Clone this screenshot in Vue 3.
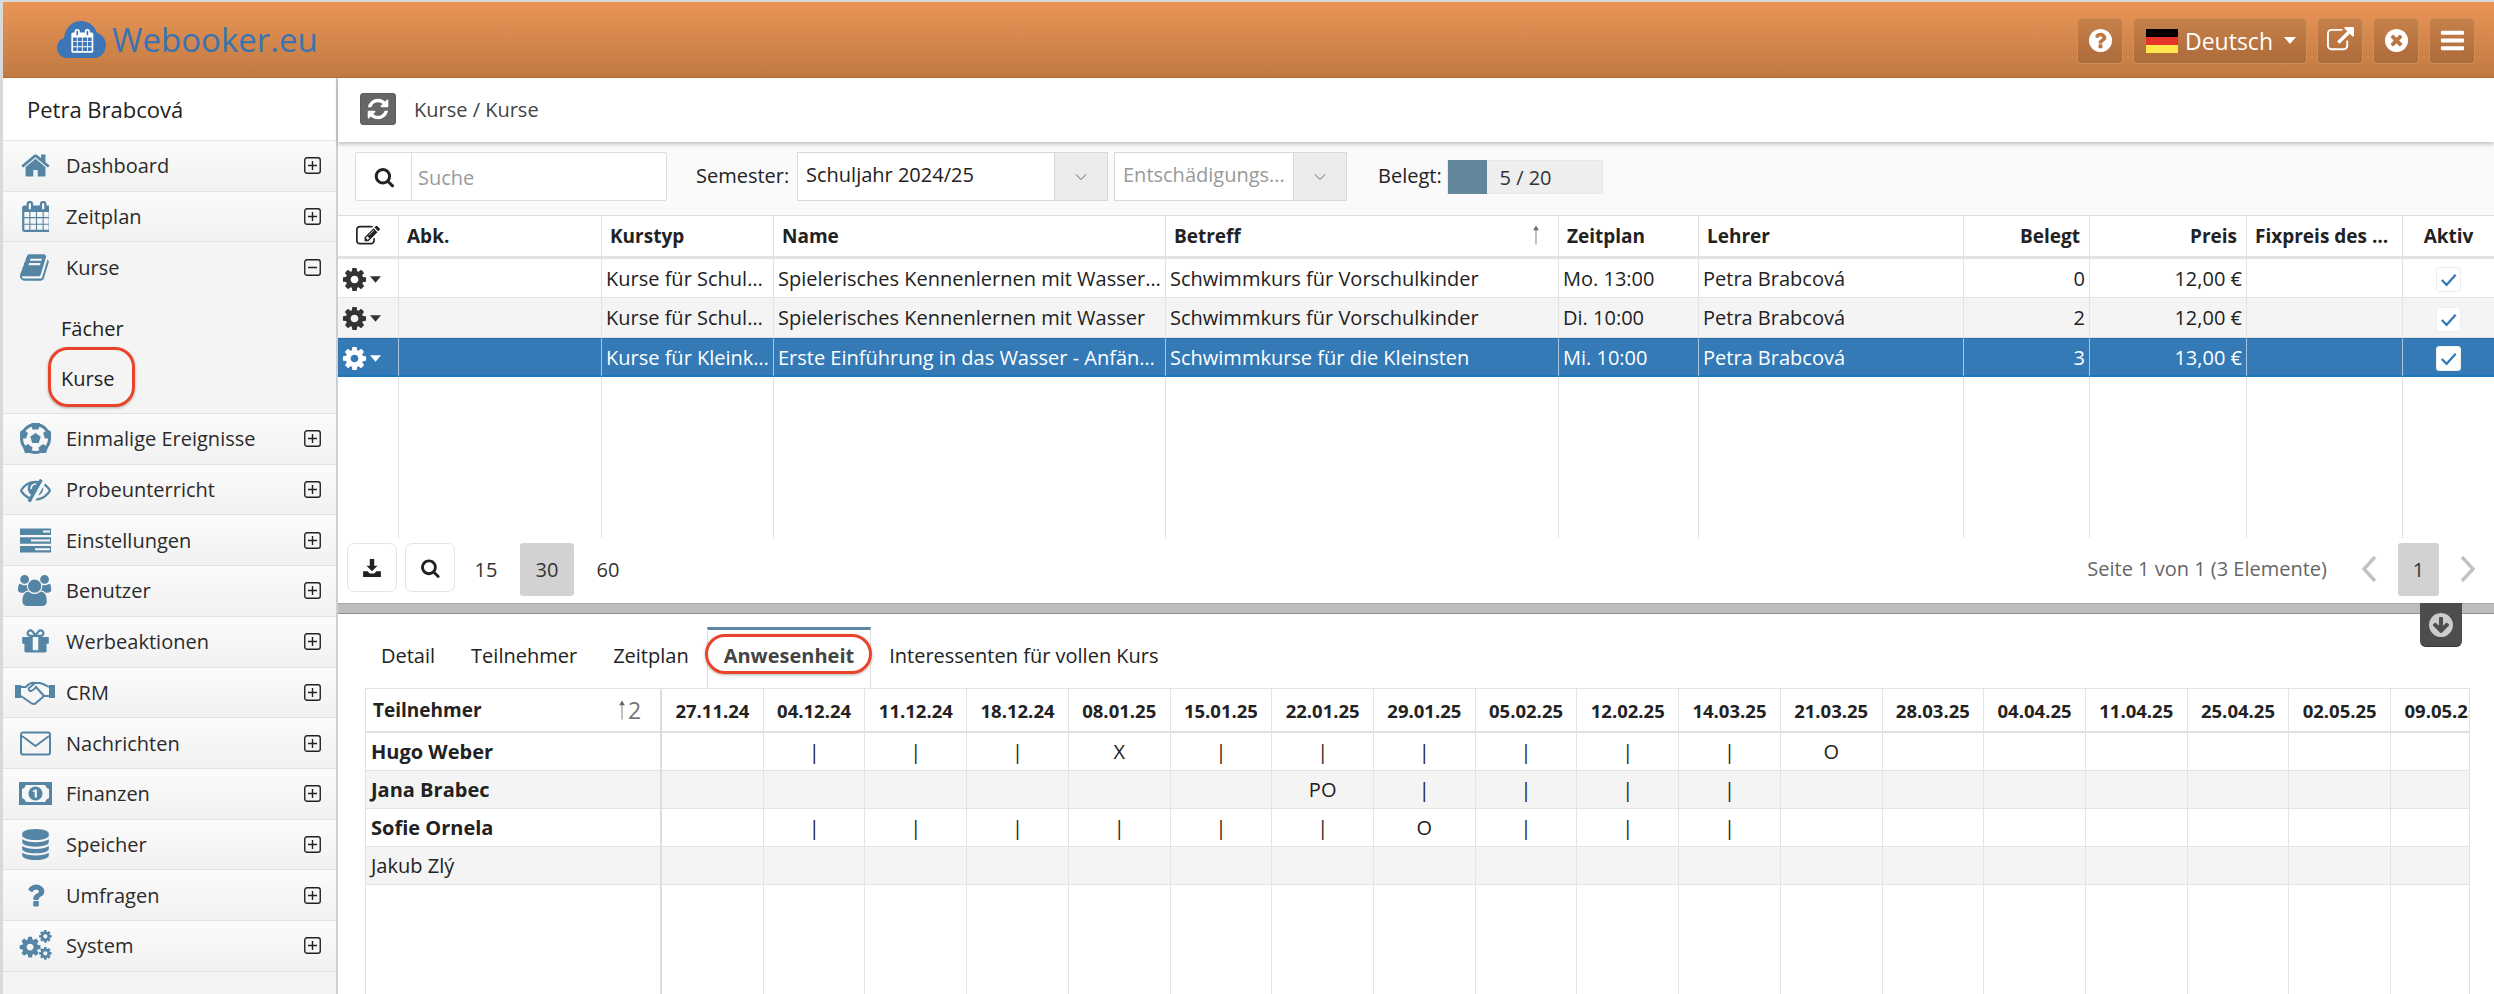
<script setup>
import { h } from 'vue'

const FA = (d, w = 1792) => ({ vb: `0 0 ${w} 1792`, parts: [{ d }] })
const pent = (cx, cy, r, rot = -90) => {
  const pts = [0, 1, 2, 3, 4].map((i) => {
    const a = ((rot + i * 72) * Math.PI) / 180
    return `${(cx + r * Math.cos(a)).toFixed(2)} ${(cy + r * Math.sin(a)).toFixed(2)}`
  })
  return 'M' + pts.join('L') + 'z'
}
const rim = [-90, -18, 54, 126, 198].map((a) => {
  const t = (a * Math.PI) / 180
  return { d: pent(15.5 + 13 * Math.cos(t), 15.5 + 13 * Math.sin(t), 5, a) }
})
const COG = 'M1152 896q0-106-75-181t-181-75-181 75-75 181 75 181 181 75 181-75 75-181zm512-109v222q0 12-8 23t-20 13l-185 28q-19 54-39 91 35 50 107 138 10 12 10 25t-9 23q-27 37-99 108t-94 71q-12 0-26-9l-138-108q-44 23-91 38-16 136-29 186-7 28-36 28h-222q-14 0-24.5-8.5t-11.5-21.5l-28-184q-49-16-90-37l-141 107q-10 9-25 9-14 0-25-11-126-114-165-168-7-10-7-23 0-12 8-23 15-21 51-66.5t54-70.5q-27-50-41-99l-183-27q-13-2-21-12.5t-8-23.5v-222q0-12 8-23t19-13l186-28q14-46 39-92-40-57-107-138-10-12-10-24 0-10 9-23 26-36 98.5-107.5t94.5-71.5q13 0 26 10l138 107q44-23 91-38 16-136 29-186 7-28 36-28h222q14 0 24.5 8.5t11.5 21.5l28 184q49 16 90 37l142-107q9-9 24-9 13 0 25 10 129 119 165 170 7 8 7 22 0 12-8 23-15 21-51 66.5t-54 70.5q26 50 41 98l183 28q13 2 21 12.5t8 23.5z'
const CAL = 'M192 1664h288v-288h-288v288zm352 0h320v-288h-320v288zm-352-352h288v-320h-288v320zm352 0h320v-320h-320v320zm-352-384h288v-288h-288v288zm736 736h320v-288h-320v288zm-384-736h320v-288h-320v288zm768 736h288v-288h-288v288zm-384-352h320v-320h-320v320zm-352-864v-288q0-13-9.5-22.5t-22.5-9.5h-64q-13 0-22.5 9.5t-9.5 22.5v288q0 13 9.5 22.5t22.5 9.5h64q13 0 22.5-9.5t9.5-22.5zm736 864h288v-320h-288v320zm-384-384h320v-288h-320v288zm384 0h288v-288h-288v288zm32-480v-288q0-13-9.5-22.5t-22.5-9.5h-64q-13 0-22.5 9.5t-9.5 22.5v288q0 13 9.5 22.5t22.5 9.5h64q13 0 22.5-9.5t9.5-22.5zm384-64v1280q0 52-38 90t-90 38h-1408q-52 0-90-38t-38-90v-1280q0-52 38-90t90-38h128v-96q0-66 47-113t113-47h64q66 0 113 47t47 113v96h384v-96q0-66 47-113t113-47h64q66 0 113 47t47 113v96h128q52 0 90 38t38 90z'
const BG = '#f6f6f6'

const I = {
  home: FA('M1472 992v480q0 26-19 45t-45 19h-384v-384h-256v384h-384q-26 0-45-19t-19-45v-480q0-1 .5-3t.5-3l575-474 575 474q1 2 1 6zm223-69l-62 74q-8 9-21 11h-3q-13 0-21-7l-692-577-692 577q-12 8-24 7-13-2-21-11l-62-74q-8-10-7-23.5t11-21.5l719-599q32-26 76-26t76 26l244 204v-195q0-14 9-23t23-9h192q14 0 23 9t9 23v408l219 182q10 8 11 21.5t-7 23.5z'),
  calendar: FA(CAL, 1664),
  book: FA('M1639 478q40 57 18 129l-275 906q-19 64-76.5 107.5t-122.5 43.5h-923q-77 0-148.5-53.5t-99.5-131.5q-24-67-2-127 0-4 3-27t4-37q1-8-3-21.5t-3-19.5q2-11 8-21t16.5-23.5 16.5-23.5q23-38 45-91.5t30-91.5q3-10 .5-30t-.5-28q3-11 17-28t17-23q21-36 42-92t25-90q1-9-2.5-32t.5-28q4-13 22-30.5t22-22.5q19-26 42.5-84.5t27.5-96.5q1-8-3-25.5t-2-26.5q2-8 9-18t18-23 17-21q8-12 16.5-30.5t15-35 16-36 19.5-32 26.5-23.5 36-11.5 47.5 5.5l-1 3q38-9 51-9h761q74 0 114 56t18 130l-274 906q-36 119-71.5 153.5t-128.5 34.5h-869q-27 0-38 15-11 16-1 43 24 70 144 70h923q29 0 56-15.5t35-41.5l300-987q7-22 5-57 38 15 59 43zm-1064 2q-4 13 2 22.5t20 9.5h608q13 0 25.5-9.5t16.5-22.5l21-64q4-13-2-22.5t-20-9.5h-608q-13 0-25.5 9.5t-16.5 22.5zm-83 256q-4 13 2 22.5t20 9.5h608q13 0 25.5-9.5t16.5-22.5l21-64q4-13-2-22.5t-20-9.5h-608q-13 0-25.5 9.5t-16.5 22.5z'),
  ball: {
    vb: '0 0 31 31',
    parts: [
      { d: 'M15.5 0a15.5 15.5 0 1 0 .01 0z' },
      { d: 'M15.5 3a12.5 12.5 0 1 0 .01 0z', fill: BG },
      { d: pent(15.5, 15.5, 5.5) },
      ...rim
    ]
  },
  eye: FA('M555 1335l78-141q-87-63-136-159t-49-203q0-121 61-225-229 117-381 353 167 258 427 375zm389-759q0-20-14-34t-34-14q-125 0-214.5 89.5t-89.5 214.5q0 20 14 34t34 14 34-14 14-34q0-86 61-147t147-61q20 0 34-14t14-34zm363-191q0 7-1 9-106 189-316 567t-315 566l-49 89q-10 16-28 16-12 0-134-70-16-10-16-28 0-12 44-87-143-65-263.5-173t-208.5-245q-20-31-20-69t20-69q153-235 380-371t496-136q89 0 180 17l54-97q10-16 28-16 5 0 18 6t31 15.5 33 18.5 31.5 18.5 19.5 11.5q16 10 16 27zm37 447q0 139-79 253.5t-209 164.5l280-502q8 45 8 84zm448 128q0 35-20 69-39 64-109 145-150 172-347.5 267t-419.5 95l74-132q212-18 392.5-137t301.5-307q-115-179-282-294l63-112q95 64 182.5 153t144.5 184q20 34 20 69z'),
  tasks: {
    vb: '0 0 31 31',
    parts: [
      { d: 'M0 3.5h31v6.5H0zM0 12.2h31v6.5H0zM0 21h31v6.5H0z' },
      { d: 'M23 5.5h7v2h-7zM11 14.4h19v2H11zM15 23.2h15v2H15z', fill: BG }
    ]
  },
  users: FA('M593 896q-162 5-265 128h-134q-82 0-138-40.5t-56-118.5q0-353 124-353 6 0 43.5 21t97.5 42.5 119 21.5q67 0 133-23-5 37-5 66 0 139 81 256zm1071 637q0 120-73 189.5t-194 69.5h-874q-121 0-194-69.5t-73-189.5q0-53 3.5-103.5t14-109 26.5-108.5 43-97.5 62-81 85.5-53.5 111.5-20q10 0 43 21.5t73 48 107 48 135 21.5 135-21.5 107-48 73-48 43-21.5q61 0 111.5 20t85.5 53.5 62 81 43 97.5 26.5 108.5 14 109 3.5 103.5zm-1024-1277q0 106-75 181t-181 75-181-75-75-181 75-181 181-75 181 75 75 181zm704 384q0 159-112.5 271.5t-271.5 112.5-271.5-112.5-112.5-271.5 112.5-271.5 271.5-112.5 271.5 112.5 112.5 271.5zm576 225q0 78-56 118.5t-138 40.5h-134q-103-123-265-128 81-117 81-256 0-29-5-66 66 23 133 23 59 0 119-21.5t97.5-42.5 43.5-21q124 0 124 353zm-128-609q0 106-75 181t-181 75-181-75-75-181 75-181 181-75 181 75 75 181z', 1920),
  gift: FA('M1056 1356v-716h-320v716q0 25 18 38.5t46 13.5h192q28 0 46-13.5t18-38.5zm-456-844h195l-126-161q-26-31-69-31-40 0-68 28t-28 68 28 68 68 28zm688-96q0-40-28-68t-68-28q-43 0-69 31l-125 161h194q40 0 68-28t28-68zm376 256v320q0 14-9 23t-23 9h-96v416q0 40-28 68t-68 28h-1088q-40 0-68-28t-28-68v-416h-96q-14 0-23-9t-9-23v-320q0-14 9-23t23-9h440q-93 0-158.5-65.5t-65.5-158.5 65.5-158.5 158.5-65.5q107 0 168 77l128 165 128-165q61-77 168-77 93 0 158.5 65.5t65.5 158.5-65.5 158.5-158.5 65.5h440q14 0 23 9t9 23z'),
  shake: {
    vb: '0 0 40 31',
    parts: [
      { d: 'M0 8h6v13H0zM34 8h6v13h-6z' },
      { d: 'M6 10l5 0q4-5 9-4l5 0q4 1 9 4M34 19l-5 0-8 7q-2 2-5 0l-10-7M20 6l-6 5q-1 3 2 3 3-1 5-4l8 9', fill: 'none', stroke: 'currentColor', sw: 2 }
    ]
  },
  mail: {
    vb: '0 0 31 31',
    parts: [
      { d: 'M3 4.5h25a2 2 0 0 1 2 2v18a2 2 0 0 1-2 2H3a2 2 0 0 1-2-2v-18a2 2 0 0 1 2-2zM2 8l13.5 10L29 8', fill: 'none', stroke: 'currentColor', sw: 2 }
    ]
  },
  money: {
    vb: '0 0 33 31',
    parts: [
      { d: 'M0 4h33v23H0z' },
      { d: 'M7 7h19q1 3 4 4v9q-3 1-4 4H7q-1-3-4-4v-9q3-1 4-4z', fill: BG },
      { d: 'M16.5 8.5a7 7 0 1 0 .01 0z' },
      { d: 'M15.7 11.5h2.2v8h-2.2zM13.8 12.8l2-1.3v2l-2 .8z', fill: BG }
    ]
  },
  db: FA('M896 768q237 0 443-43t325-127v170q0 69-103 128t-280 93.5-385 34.5-385-34.5-280-93.5-103-128v-170q119 84 325 127t443 43zm0 768q237 0 443-43t325-127v170q0 69-103 128t-280 93.5-385 34.5-385-34.5-280-93.5-103-128v-170q119 84 325 127t443 43zm0-384q237 0 443-43t325-127v170q0 69-103 128t-280 93.5-385 34.5-385-34.5-280-93.5-103-128v-170q119 84 325 127t443 43zm0-1152q208 0 385 34.5t280 93.5 103 128v128q0 69-103 128t-280 93.5-385 34.5-385-34.5-280-93.5-103-128v-128q0-69 103-128t280-93.5 385-34.5z'),
  question: FA('M1088 1256v240q0 16-12 28t-28 12h-240q-16 0-28-12t-12-28v-240q0-16 12-28t28-12h240q16 0 28 12t12 28zm316-600q0 54-15.5 101t-35 76.5-55 59.5-57.5 43.5-61 35.5q-41 23-68.5 65t-27.5 67q0 17-12 32.5t-28 15.5h-240q-15 0-25.5-18.5t-10.5-37.5v-45q0-83 65-156.5t143-108.5q59-27 84-56t25-76q0-42-46.5-74t-107.5-32q-65 0-108 29-35 25-107 115-13 16-31 16-12 0-25-8l-164-125q-13-10-15.5-25t5.5-28q160-266 464-266 80 0 161 31t146 83 106 127.5 41 158.5z'),
  cogs: {
    vb: '0 0 33 31',
    parts: [
      { d: COG, tr: 'translate(-1 5) scale(.0135)' },
      { d: COG, tr: 'translate(19 -1) scale(.0082)' },
      { d: COG, tr: 'translate(19 16) scale(.0082)' }
    ]
  },
  cog: FA(COG),
  search: FA('M1216 832q0-185-131.5-316.5t-316.5-131.5-316.5 131.5-131.5 316.5 131.5 316.5 316.5 131.5 316.5-131.5 131.5-316.5zm512 832q0 52-38 90t-90 38q-54 0-90-38l-343-342q-179 124-399 124-143 0-273.5-55.5t-225-150-150-225-55.5-273.5 55.5-273.5 150-225 225-150 273.5-55.5 273.5 55.5 225 150 150 225 55.5 273.5q0 220-124 399l343 343q37 37 37 90z', 1728),
  help: FA('M1024 1376v-192q0-14-9-23t-23-9h-192q-14 0-23 9t-9 23v192q0 14 9 23t23 9h192q14 0 23-9t9-23zm256-672q0-88-55.5-163t-138.5-116-170-41q-243 0-371 213-15 24 8 42l132 100q7 6 19 6 16 0 25-12 53-68 86-92 34-24 86-24 48 0 85.5 26t37.5 59q0 38-20 61t-68 45q-63 28-115.5 86.5t-52.5 125.5v36q0 14 9 23t23 9h192q14 0 23-9t9-23q0-19 21.5-49.5t54.5-49.5q32-18 49-28.5t46-35 44.5-48 28-60.5 12.5-81zm384 192q0 209-103 385.5t-279.5 279.5-385.5 103-385.5-103-279.5-279.5-103-385.5 103-385.5 279.5-279.5 385.5-103 385.5 103 279.5 279.5 103 385.5z'),
  times: FA('M1277 1122q0-26-19-45l-181-181 181-181q19-19 19-45 0-27-19-46l-90-90q-19-19-46-19-26 0-45 19l-181 181-181-181q-19-19-45-19-27 0-46 19l-90 90q-19 19-19 46 0 26 19 45l181 181-181 181q-19 19-19 45 0 27 19 46l90 90q19 19 46 19 26 0 45-19l181-181 181 181q19 19 45 19 27 0 46-19l90-90q19-19 19-46zm387-226q0 209-103 385.5t-279.5 279.5-385.5 103-385.5-103-279.5-279.5-103-385.5 103-385.5 279.5-279.5 385.5-103 385.5 103 279.5 279.5 103 385.5z'),
  bars: FA('M1664 1344v128q0 26-19 45t-45 19h-1408q-26 0-45-19t-19-45v-128q0-26 19-45t45-19h1408q26 0 45 19t19 45zm0-512v128q0 26-19 45t-45 19h-1408q-26 0-45-19t-19-45v-128q0-26 19-45t45-19h1408q26 0 45 19t19 45zm0-512v128q0 26-19 45t-45 19h-1408q-26 0-45-19t-19-45v-128q0-26 19-45t45-19h1408q26 0 45 19t19 45z'),
  link: FA('M1408 928v320q0 119-84.5 203.5t-203.5 84.5h-832q-119 0-203.5-84.5t-84.5-203.5v-832q0-119 84.5-203.5t203.5-84.5h704q14 0 23 9t9 23v64q0 14-9 23t-23 9h-704q-66 0-113 47t-47 113v832q0 66 47 113t113 47h832q66 0 113-47t47-113v-320q0-14 9-23t23-9h64q14 0 23 9t9 23zm384-864v512q0 26-19 45t-45 19-45-19l-176-176-652 652q-10 10-23 10t-23-10l-114-114q-10-10-10-23t10-23l652-652-176-176q-19-19-19-45t19-45 45-19h512q26 0 45 19t19 45z'),
  refresh: FA('M1639 1056q0 5-1 7-64 268-268 434.5t-478 166.5q-146 0-282.5-55t-243.5-157l-129 129q-19 19-45 19t-45-19-19-45v-448q0-26 19-45t45-19h448q26 0 45 19t19 45-19 45l-137 137q71 66 161 102t187 36q134 0 250-65t186-179q11-17 53-117 8-23 30-23h192q13 0 22.5 9.5t9.5 22.5zm25-800v448q0 26-19 45t-45 19h-448q-26 0-45-19t-19-45 19-45l138-138q-148-137-349-137-134 0-250 65t-186 179q-11 17-53 117-8 23-30 23h-199q-13 0-22.5-9.5t-9.5-22.5v-7q65-268 270-434.5t480-166.5q146 0 284 55.5t245 156.5l130-129q19-19 45-19t45 19 19 45z'),
  down: FA('M1412 897q0-27-18-45l-91-91q-18-18-45-18t-45 18l-189 189v-502q0-26-19-45t-45-19h-128q-26 0-45 19t-19 45v502l-189-189q-19-19-45-19t-45 19l-91 91q-18 18-18 45t18 45l362 362 91 91q18 18 45 18t45-18l91-91 362-362q18-18 18-45zm252-1q0 209-103 385.5t-279.5 279.5-385.5 103-385.5-103-279.5-279.5-103-385.5 103-385.5 279.5-279.5 385.5-103 385.5 103 279.5 279.5 103 385.5z'),
  edit: FA('M888 1184l116-116-152-152-116 116v56h96v96h56zm440-720q-16-16-33 1l-350 350q-17 17-1 33t33-1l350-350q17-17 1-33zm80 594v190q0 119-84.5 203.5t-203.5 84.5h-832q-119 0-203.5-84.5t-84.5-203.5v-832q0-119 84.5-203.5t203.5-84.5h832q63 0 117 25 15 7 18 23 3 17-9 29l-49 49q-14 14-32 8-23-6-45-6h-832q-66 0-113 47t-47 113v832q0 66 47 113t113 47h832q66 0 113-47t47-113v-126q0-13 9-22l64-64q15-15 35-7t20 29zm-96-738l288 288-672 672h-288v-288zm444 132l-92 92-288-288 92-92q28-28 68-28t68 28l152 152q28 28 28 68t-28 68z'),
  save: {
    vb: '0 0 18 18',
    parts: [
      { d: 'M7 1h4v6h3l-5 5-5-5h3zM1 12h4l2 2h4l2-2h4v5H1z' }
    ]
  },
  plus: {
    vb: '0 0 17 17',
    parts: [{ d: 'M3 .75h11A2.25 2.25 0 0 1 16.25 3v11a2.25 2.25 0 0 1-2.25 2.25H3A2.25 2.25 0 0 1 .75 14V3A2.25 2.25 0 0 1 3 .75zM8.5 4v9M4 8.5h9', fill: 'none', stroke: 'currentColor', sw: 1.4 }]
  },
  minus: {
    vb: '0 0 17 17',
    parts: [{ d: 'M3 .75h11A2.25 2.25 0 0 1 16.25 3v11a2.25 2.25 0 0 1-2.25 2.25H3A2.25 2.25 0 0 1 .75 14V3A2.25 2.25 0 0 1 3 .75zM4 8.5h9', fill: 'none', stroke: 'currentColor', sw: 1.4 }]
  },
  caret: { vb: '0 0 12 7', parts: [{ d: 'M0 0h12L6 7z' }] },
  check: { vb: '0 0 24 24', parts: [{ d: 'M5 12.5l5 5L19.5 7', fill: 'none', stroke: '#337ab7', sw: 2.4 }] },
  vee: { vb: '0 0 12 8', parts: [{ d: 'M1 1.5L6 6.5 11 1.5', fill: 'none', stroke: 'currentColor', sw: 1 }] },
  arrow: { vb: '0 0 10 24', parts: [{ d: 'M5 0l3.5 6h-3v18h-1V6h-3z' }] },
  chevL: { vb: '0 0 16 28', parts: [{ d: 'M14 2L3 14l11 12', fill: 'none', stroke: 'currentColor', sw: 3.4 }] },
  chevR: { vb: '0 0 16 28', parts: [{ d: 'M2 2l11 12L2 26', fill: 'none', stroke: 'currentColor', sw: 3.4 }] },
  logo: {
    vb: '0 0 49 37',
    parts: [
      { d: 'M11 37C4 37 0 32 0 27c0-5 3-9 7-10C8 7 15 0 24 0c8 0 14 5 16 12 5 1 9 6 9 12 0 7-5 13-12 13z' },
      { d: CAL, tr: 'translate(13.5 8) scale(.0132)', fill: '#fff' }
    ]
  }
}

const Ico = (props) =>
  h(
    'svg',
    { viewBox: I[props.n].vb, 'aria-hidden': 'true' },
    I[props.n].parts.map((p) =>
      h('path', {
        d: p.d,
        fill: p.fill || 'currentColor',
        transform: p.tr,
        stroke: p.stroke,
        'stroke-width': p.sw
      })
    )
  )
Ico.props = ['n']

const menuTop = [
  { label: 'Dashboard', icon: 'home' },
  { label: 'Zeitplan', icon: 'calendar' }
]
const menuRest = [
  { label: 'Einmalige Ereignisse', icon: 'ball' },
  { label: 'Probeunterricht', icon: 'eye' },
  { label: 'Einstellungen', icon: 'tasks' },
  { label: 'Benutzer', icon: 'users' },
  { label: 'Werbeaktionen', icon: 'gift' },
  { label: 'CRM', icon: 'shake' },
  { label: 'Nachrichten', icon: 'mail' },
  { label: 'Finanzen', icon: 'money' },
  { label: 'Speicher', icon: 'db' },
  { label: 'Umfragen', icon: 'question' },
  { label: 'System', icon: 'cogs' }
]

const courses = [
  { typ: 'Kurse für Schulkinder', name: 'Spielerisches Kennenlernen mit Wasser und Spaß', betreff: 'Schwimmkurs für Vorschulkinder', zeit: 'Mo. 13:00', belegt: 0, preis: '12,00 €' },
  { typ: 'Kurse für Schulkinder', name: 'Spielerisches Kennenlernen mit Wasser', betreff: 'Schwimmkurs für Vorschulkinder', zeit: 'Di. 10:00', belegt: 2, preis: '12,00 €' },
  { typ: 'Kurse für Kleinkinder', name: 'Erste Einführung in das Wasser - Anfänger', betreff: 'Schwimmkurse für die Kleinsten', zeit: 'Mi. 10:00', belegt: 3, preis: '13,00 €', sel: true }
]

const dates = ['27.11.24', '04.12.24', '11.12.24', '18.12.24', '08.01.25', '15.01.25', '22.01.25', '29.01.25', '05.02.25', '12.02.25', '14.03.25', '21.03.25', '28.03.25', '04.04.25', '11.04.25', '25.04.25', '02.05.25', '09.05.25']
const attendance = [
  { name: 'Hugo Weber', bold: true, marks: ['', '|', '|', '|', 'X', '|', '|', '|', '|', '|', '|', 'O'] },
  { name: 'Jana Brabec', bold: true, marks: ['', '', '', '', '', '', 'PO', '|', '|', '|', '|', ''] },
  { name: 'Sofie Ornela', bold: true, marks: ['', '|', '|', '|', '|', '|', '|', 'O', '|', '|', '|', ''] },
  { name: 'Jakub Zlý', bold: false, marks: [] }
]
const tabs = ['Detail', 'Teilnehmer', 'Zeitplan', 'Anwesenheit', 'Interessenten für vollen Kurs']
</script>

<template>
  <div class="app">
    <header class="topbar">
      <div class="brand">
        <Ico n="logo" class="logo" />
        <span class="brand-name">Webooker.eu</span>
      </div>
      <div class="actions">
        <button class="tbtn"><Ico n="help" class="tic" /></button>
        <button class="tbtn lang">
          <span class="flag"><i class="s1"></i><i class="s2"></i><i class="s3"></i></span>
          <span>Deutsch</span>
          <Ico n="caret" class="lang-caret" />
        </button>
        <button class="tbtn"><Ico n="link" class="tic" /></button>
        <button class="tbtn"><Ico n="times" class="tic" /></button>
        <button class="tbtn"><Ico n="bars" class="tic" /></button>
      </div>
    </header>

    <div class="body">
      <aside class="sidebar">
        <div class="user">Petra Brabcová</div>
        <nav>
          <div v-for="m in menuTop" :key="m.label" class="mi">
            <span class="mi-ic"><Ico :n="m.icon" /></span>
            <span class="mi-label">{{ m.label }}</span>
            <Ico n="plus" class="mi-tog" />
          </div>
          <div class="mi open">
            <span class="mi-ic"><Ico n="book" /></span>
            <span class="mi-label">Kurse</span>
            <Ico n="minus" class="mi-tog" />
          </div>
          <div class="sub">
            <div class="sub-item">Fächer</div>
            <div class="sub-item"><span class="ring ring-side"></span>Kurse</div>
          </div>
          <div v-for="m in menuRest" :key="m.label" class="mi">
            <span class="mi-ic"><Ico :n="m.icon" /></span>
            <span class="mi-label">{{ m.label }}</span>
            <Ico n="plus" class="mi-tog" />
          </div>
        </nav>
      </aside>

      <main class="main">
        <div class="crumb">
          <button class="refresh"><Ico n="refresh" /></button>
          <span>Kurse / Kurse</span>
        </div>

        <div class="toolbar">
          <div class="search">
            <span class="search-btn"><Ico n="search" /></span>
            <span class="search-input">Suche</span>
          </div>
          <span class="lbl lbl-sem">Semester:</span>
          <div class="select sel-sem">
            <span class="sel-text">Schuljahr 2024/25</span>
            <span class="sel-arrow"><Ico n="vee" /></span>
          </div>
          <div class="select sel-ent">
            <span class="sel-text muted">Entschädigungs...</span>
            <span class="sel-arrow"><Ico n="vee" /></span>
          </div>
          <span class="lbl lbl-bel">Belegt:</span>
          <div class="progress">
            <div class="progress-fill" :style="{ width: (5 / 20) * 100 + '%' }"></div>
            <span class="progress-text">5 / 20</span>
          </div>
        </div>

        <div class="tbl-wrap">
          <table class="tbl">
            <colgroup>
              <col class="c0" /><col class="c1" /><col class="c2" /><col class="c3" /><col class="c4" />
              <col class="c5" /><col class="c6" /><col class="c7" /><col class="c8" /><col class="c9" /><col class="c10" />
            </colgroup>
            <thead>
              <tr>
                <th class="ctr"><Ico n="edit" class="edit" /></th>
                <th>Abk.</th>
                <th>Kurstyp</th>
                <th>Name</th>
                <th class="sorted">Betreff<Ico n="arrow" class="sort-arrow" /></th>
                <th>Zeitplan</th>
                <th>Lehrer</th>
                <th class="num">Belegt</th>
                <th class="num">Preis</th>
                <th>Fixpreis des Kurses</th>
                <th class="ctr">Aktiv</th>
              </tr>
            </thead>
            <tbody>
              <tr v-for="c in courses" :key="c.zeit" :class="{ sel: c.sel }">
                <td class="gear-cell"><Ico n="cog" class="gear" /><Ico n="caret" class="gear-caret" /></td>
                <td></td>
                <td>{{ c.typ }}</td>
                <td>{{ c.name }}</td>
                <td>{{ c.betreff }}</td>
                <td>{{ c.zeit }}</td>
                <td>Petra Brabcová</td>
                <td class="num">{{ c.belegt }}</td>
                <td class="num">{{ c.preis }}</td>
                <td></td>
                <td class="ctr"><span class="chk"><Ico n="check" /></span></td>
              </tr>
              <tr class="filler"><td v-for="n in 11" :key="n"></td></tr>
            </tbody>
          </table>
        </div>

        <div class="pager">
          <button class="pbtn"><Ico n="save" /></button>
          <button class="pbtn"><Ico n="search" /></button>
          <span class="size first">15</span>
          <span class="size on">30</span>
          <span class="size">60</span>
          <span class="pinfo">Seite 1 von 1 (3 Elemente)</span>
          <Ico n="chevL" class="chev" />
          <span class="size on page">1</span>
          <Ico n="chevR" class="chev" />
        </div>

        <div class="splitter">
          <span class="collapse"><Ico n="down" /></span>
        </div>

        <div class="tabs">
          <div
            v-for="t in tabs"
            :key="t"
            class="tab"
            :class="{ active: t === 'Anwesenheit' }"
          >
            <span v-if="t === 'Anwesenheit'" class="ring ring-tab"></span>{{ t }}
          </div>
        </div>

        <div class="grid-wrap">
          <table class="grid">
            <thead>
              <tr>
                <th class="gname">
                  <span class="gname-in">Teilnehmer<span class="gsort"><Ico n="arrow" class="gsort-arrow" />2</span></span>
                </th>
                <th v-for="d in dates" :key="d">{{ d }}</th>
              </tr>
            </thead>
            <tbody>
              <tr v-for="p in attendance" :key="p.name">
                <td class="gname" :class="{ b: p.bold }">{{ p.name }}</td>
                <td v-for="(d, i) in dates" :key="d">{{ p.marks[i] }}</td>
              </tr>
              <tr class="gfill">
                <td class="gname"></td>
                <td v-for="d in dates" :key="d"></td>
              </tr>
            </tbody>
          </table>
        </div>
      </main>
    </div>
  </div>
</template>

<style>
html, body { margin: 0; background: #fff; }
</style>

<style scoped>
* { box-sizing: border-box; }
svg { display: block; }
button { font: inherit; padding: 0; cursor: pointer; }

.app {
  width: 2494px;
  height: 994px;
  overflow: hidden;
  padding-top: 2px;
  background: #d9d9d9;
  font-family: "Open Sans", "Noto Sans", sans-serif;
  font-size: 20px;
  color: #222;
  display: flex;
  flex-direction: column;
}

/* top bar */
.topbar {
  height: 76px;
  margin-left: 3px;
  flex: none;
  display: flex;
  align-items: center;
  justify-content: space-between;
  padding: 2px 19px 0 54px;
  background: linear-gradient(#e99556, #c07a42);
  border-bottom: 1px solid #b86d2e;
}
.brand { display: flex; align-items: center; gap: 6px; margin-top: -2px; }
.logo { width: 49px; height: 37px; color: #3d76b6; }
.brand-name { font-size: 33px; color: #3b73b2; }
.actions { display: flex; gap: 10px; }
.tbtn {
  height: 46px;
  width: 46px;
  display: flex;
  align-items: center;
  justify-content: center;
  color: #fff;
  background: linear-gradient(#c68049, #ad6b3b);
  border: 1px solid #cf8f5a;
  border-radius: 4px;
}
.tic { width: 27px; height: 27px; }
.lang { width: 174px; font-size: 23px; justify-content: flex-start; padding-left: 12px; gap: 7px; }
.flag { width: 32px; height: 24px; display: flex; flex-direction: column; }
.flag i { flex: 1; }
.s1 { background: #000; }
.s2 { background: #e5352a; }
.s3 { background: #fde74c; }
.lang-caret { width: 12px; height: 7px; margin-left: 4px; }

.body { flex: 1; display: flex; min-height: 0; padding-left: 3px; }

/* sidebar */
.sidebar {
  width: 335px;
  flex: none;
  background: #f4f4f4;
  border-right: 2px solid #cfcfcf;
}
.user {
  height: 63px;
  background: #fff;
  border-bottom: 1px solid #e6e6e6;
  padding-left: 24px;
  display: flex;
  align-items: center;
  font-size: 22px;
}
.mi {
  height: 50.7px;
  display: flex;
  align-items: center;
  padding-right: 15px;
  background: linear-gradient(#fbfbfb, #f1f1f1);
  border-bottom: 1px solid #e2e2e2;
  font-size: 20px;
}
.mi.open { background: #f4f4f4; border-bottom: 0; }
.mi-ic {
  width: 60px;
  margin-left: 3px;
  flex: none;
  display: flex;
  justify-content: center;
  padding-right: 2px;
  color: #5485a4;
}
.mi-ic svg { height: 31px; width: auto; max-width: 42px; }
.mi-label { flex: 1; color: #2b2b2b; }
.mi-tog { width: 17px; height: 17px; color: #222; }
.sub {
  height: 121px;
  padding-top: 10px;
  background: #f4f4f4;
  border-bottom: 1px solid #e2e2e2;
}
.sub-item {
  height: 50px;
  padding-left: 58px;
  display: flex;
  align-items: center;
  position: relative;
  font-size: 20px;
}
.ring {
  position: absolute;
  border: 3px solid #e9442b;
  border-radius: 16px;
  box-shadow: 0 1px 3px rgba(0, 0, 0, .3);
  pointer-events: none;
}
.ring-side { left: 45px; top: -6px; width: 87px; height: 60px; border-radius: 20px; }
.ring-tab { left: -3px; top: 4px; width: 167px; height: 40px; border-radius: 20px; }

/* main */
.main { flex: 1; min-width: 0; background: #fff; display: flex; flex-direction: column; }
.crumb {
  height: 64px;
  flex: none;
  display: flex;
  align-items: center;
  gap: 18px;
  padding: 0 0 2px 22px;
  position: relative;
  z-index: 1;
  background: #fff;
  box-shadow: 0 2px 4px rgba(0, 0, 0, .25);
  color: #444;
}
.refresh {
  width: 36px;
  height: 32px;
  display: flex;
  align-items: center;
  justify-content: center;
  background: #666;
  color: #fff;
  border: 1px solid #5c5c5c;
  border-radius: 3px;
}
.refresh svg { width: 24px; height: 24px; }

.toolbar {
  height: 73px;
  flex: none;
  display: flex;
  align-items: flex-start;
  padding: 10px 0 0 17px;
  background: #fafafa;
}
.search { width: 312px; height: 49px; display: flex; background: #fff; border: 1px solid #ddd; border-radius: 2px; }
.search-btn {
  width: 56px;
  display: flex;
  align-items: center;
  justify-content: center;
  border-right: 1px solid #ddd;
  color: #222;
}
.search-btn svg { width: 20px; height: 22px; }
.search-input { padding-left: 6px; line-height: 49px; color: #999; }
.lbl { line-height: 48px; }
.lbl-sem { margin-left: 29px; width: 101px; }
.lbl-bel { margin-left: 31px; width: 69px; }
.select { height: 49px; display: flex; background: #fff; border: 1px solid #d8d8d8; }
.sel-sem { width: 311px; }
.sel-ent { width: 233px; margin-left: 6px; }
.sel-text { flex: 1; padding-left: 8px; line-height: 44px; white-space: nowrap; overflow: hidden; }
.muted { color: #999; }
.sel-arrow {
  width: 53px;
  flex: none;
  display: flex;
  align-items: center;
  justify-content: center;
  background: #ececec;
  border-left: 1px solid #d8d8d8;
  color: #666;
}
.sel-arrow svg { width: 12px; height: 8px; }
.progress {
  width: 156px;
  height: 34px;
  margin-top: 8px;
  display: flex;
  align-items: center;
  background: #eee;
  border: 1px solid #e8e8e8;
}
.progress-fill { height: 34px; background: #62869b; flex: none; }
.progress-text { padding-left: 13px; color: #333; }

/* course table */
.tbl-wrap { height: 323px; flex: none; border-top: 1px solid #ddd; }
.tbl { width: 2156px; height: 322px; table-layout: fixed; border-collapse: separate; border-spacing: 0; font-size: 20px; }
.c0 { width: 61px; } .c1 { width: 203px; } .c2 { width: 172px; } .c3 { width: 392px; } .c4 { width: 393px; }
.c5 { width: 140px; } .c6 { width: 265px; } .c7 { width: 126px; } .c8 { width: 157px; } .c9 { width: 156px; } .c10 { width: 91px; }
.tbl th, .tbl td {
  border-right: 1px solid #e2e2e2;
  white-space: nowrap;
  overflow: hidden;
  text-overflow: ellipsis;
  padding: 0 4px 0 4px;
  text-align: left;
}
.tbl th:last-child, .tbl td:last-child { border-right: 0; }
.tbl th {
  height: 43px;
  padding: 0 8px;
  border-bottom: 3px solid #e3e3e3;
  font-weight: 700;
  font-size: 19px;
  color: #222;
  vertical-align: middle;
}
.tbl td { height: 39px; border-bottom: 1px solid #e2e2e2; color: #222; }
.tbl tbody tr:nth-child(2) td { height: 40px; background: #f4f4f4; }
.tbl th.num, .tbl td.num { text-align: right; }
.tbl th.num { padding-right: 9px; }
.tbl th.ctr, .tbl td.ctr { text-align: center; padding: 0; }
.tbl tr.sel td { background: #337ab7; color: #fff; border-right-color: #a9c8e0; border-bottom: 2px solid #1f77bb; border-top: 1px solid #2d6da3; }
.tbl tr.filler td { height: auto; border-bottom: 0; background: #fff; }
.edit { width: 24px; height: 24px; margin: 0 auto; }
.sorted { position: relative; }
.sort-arrow { position: absolute; right: 18px; top: 7px; width: 8px; height: 24px; color: #666; }
.gear-cell { padding: 0 !important; }
.gear { display: inline-block; vertical-align: middle; width: 27px; height: 27px; margin-left: 3px; color: #333; }
.gear-caret { display: inline-block; vertical-align: middle; width: 11px; height: 7px; margin-left: 2px; color: #333; }
.sel .gear, .sel .gear-caret { color: #fff; }
.chk {
  display: inline-flex;
  width: 25px;
  height: 25px;
  vertical-align: middle;
  background: #fff;
  border: 1px solid #eee;
  border-radius: 3px;
}
.chk svg { width: 23px; height: 23px; }

/* pager */
.pager {
  height: 65px;
  flex: none;
  display: flex;
  align-items: flex-start;
  padding: 5px 18px 0 9px;
}
.pbtn {
  width: 50px;
  height: 49px;
  margin-right: 8px;
  background: #fff;
  border: 1px solid #e4e4e4;
  border-radius: 7px;
  display: flex;
  align-items: center;
  justify-content: center;
  color: #222;
}
.pbtn svg { width: 20px; height: 20px; }
.size { width: 54px; height: 53px; margin-right: 7px; display: flex; align-items: center; justify-content: center; color: #333; border-radius: 3px; }
.size.first { margin-left: -4px; }
.size.on { background: #d2d2d2; }
.size.page { width: 41px; margin: 0 21px; }
.pinfo { margin-left: auto; margin-right: 34px; line-height: 51px; color: #666; }
.chev { width: 16px; height: 28px; margin-top: 12px; color: #c2c2c2; }

.splitter {
  height: 11px;
  flex: none;
  background: #bdbdbd;
  border-top: 1px solid #a8a8a8;
  border-bottom: 1px solid #8f8f8f;
  position: relative;
  z-index: 2;
}
.collapse {
  position: absolute;
  left: 2082px;
  top: -1px;
  width: 42px;
  height: 44px;
  background: #4d4d4d;
  border-bottom: 1px solid #333;
  border-radius: 0 0 6px 6px;
  display: flex;
  align-items: center;
  justify-content: center;
  color: #ccc;
}
.collapse svg { width: 28px; height: 28px; }

.tabs { height: 74px; flex: none; display: flex; padding: 13px 0 0 25px; }
.tab {
  height: 61px;
  padding: 12px 18px 0 18px;
  color: #222;
  border-top: 3px solid transparent;
  white-space: nowrap;
  position: relative;
}
.tab.active {
  color: #444;
  font-weight: 700;
  border-top-color: #5f86a0;
  border-left: 1px solid #ddd;
  border-right: 1px solid #ddd;
  background: #fff;
  padding: 12px 16px 0 16px;
}

.grid-wrap { flex: 1; min-height: 0; margin: 0 24px 0 27px; overflow: hidden; border-left: 1px solid #e2e2e2; border-right: 1px solid #e2e2e2; border-top: 1px solid #e2e2e2; }
.grid { width: 2127px; height: 306px; table-layout: fixed; border-collapse: separate; border-spacing: 0; font-size: 20px; }
.grid th, .grid td {
  width: 101.7px;
  border-right: 1px solid #e4e4e4;
  border-bottom: 1px solid #e4e4e4;
  text-align: center;
  white-space: nowrap;
  overflow: hidden;
  padding: 0;
}
.grid th { height: 44px; border-bottom: 2px solid #e0e0e0; font-weight: 700; font-size: 18.5px; }
.grid td { height: 38px; }
.grid tbody tr:nth-child(even) td { background: #f4f4f4; }
.grid tr.gfill td { height: auto; border-bottom: 0; background: #fff !important; }
.grid .gname { width: 296px; text-align: left; padding-left: 7px; border-right: 2px solid #ddd; font-size: 19px; }
.grid td.gname { padding-left: 5px; font-size: 20px; }
.grid td.b { font-weight: 700; }
.gname-in { display: flex; align-items: center; justify-content: space-between; padding-right: 19px; }
.gsort { display: flex; align-items: center; gap: 2px; font-weight: 400; font-size: 23px; color: #777; }
.gsort-arrow { width: 8px; height: 24px; color: #666; }
</style>
